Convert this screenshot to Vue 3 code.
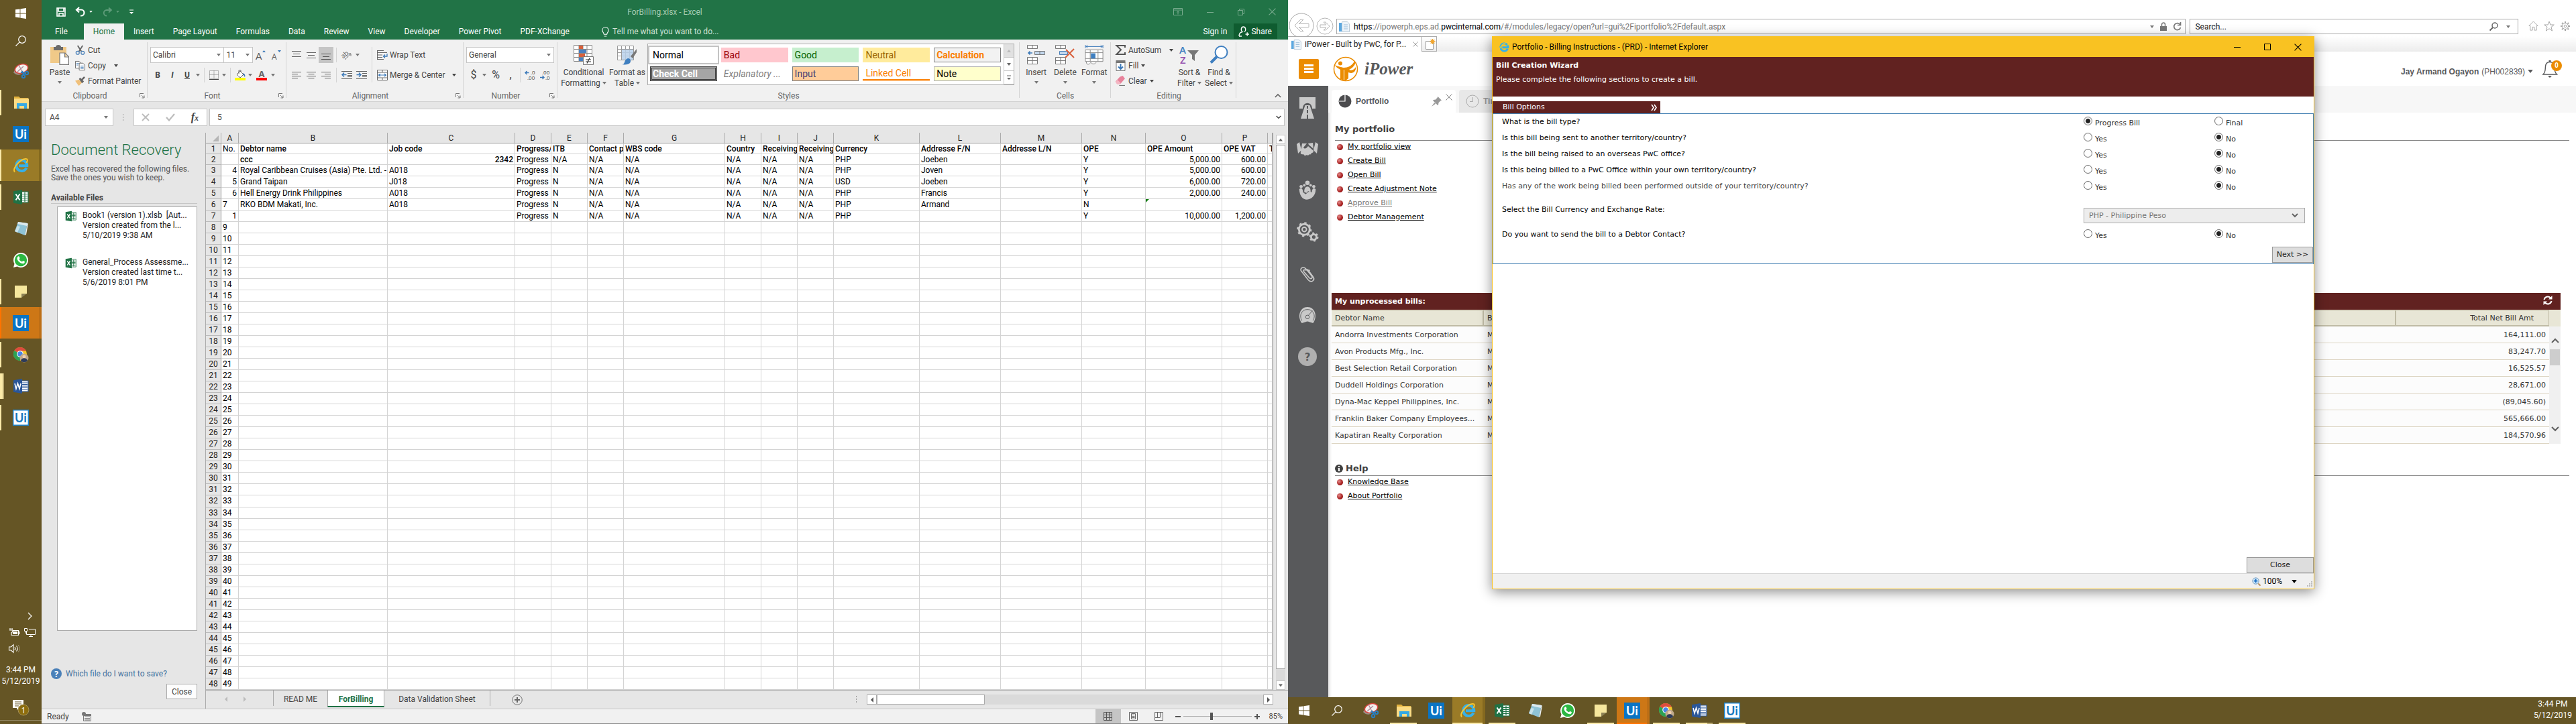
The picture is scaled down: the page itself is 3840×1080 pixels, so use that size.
<script setup>
import { h, ref } from 'vue'

const glyphs = {
  win: ['0 0 16 16', '<path fill="#fff" d="M0 2.3 6.6 1.400V7.500H0zM7.400 1.300 16 0v7.500H7.400zM0 8.400h6.600v6.100L0 13.600zM7.400 8.400H16V16l-8.600-1.200z"/>'],
  find: ['0 0 16 16', '<g fill="none" stroke="#fff" stroke-width="1.200"><circle cx="10" cy="6" r="5.300"/><path d="M6.200 9.800.500 15.500"/></g>'],
  snip: ['0 0 24 24', '<path d="M1 14c3 4 9 5 12 2l2-3L4 9z" fill="#9c9088"/><ellipse cx="13" cy="8.500" rx="10" ry="6.500" transform="rotate(-18 13 8.500)" fill="#f4f0ee" stroke="#d9433c" stroke-width="1.500"/><path d="m9 3 5 10M16 5l-9 8" stroke="#a89" stroke-width="1.300"/><g fill="none" stroke="#2a7fc0" stroke-width="2"><circle cx="16" cy="20" r="2.200"/><circle cx="21" cy="15" r="2.200"/><path d="m14 12 3 6M12 14l7 1"/></g>'],
  folder: ['0 0 24 24', '<path fill="#e2b13c" d="M2 3h7l2 2h12v4H2z"/><path fill="#fbdc85" d="M2 6h22v15H2z"/><path fill="#36a9e4" d="M6 21v-8h15v8h-4v-4h-7v4z"/>'],
  ui: ['0 0 24 24', '<path fill="#0a74c4" d="M0 0h24v24H0z"/><text x="12" y="18.500" text-anchor="middle" font-family="Lato, sans-serif" font-size="18" font-weight="700" fill="#fff">Ui</text>'],
  uiw: ['0 0 24 24', '<path fill="#fff" stroke="#1f86d1" stroke-width="1.500" d="M.7.7h22.600v22.600H.7z"/><text x="12" y="18.500" text-anchor="middle" font-family="Lato, sans-serif" font-size="18" font-weight="700" fill="#1478c0">Ui</text>'],
  ie: ['0 0 24 24', '<path d="M20.500 15.500a8 8 0 1 1 .8-3.200H9" fill="none" stroke="#35b1ea" stroke-width="4"/><path d="M3 21.500C-1 17 10 3 19 2c4-.3 3 3 1.500 6" fill="none" stroke="#f6c52f" stroke-width="1.900"/>'],
  xl: ['0 0 24 24', '<path fill="#fff" stroke="#207245" stroke-width="1.200" d="M12 4h11v16H12z"/><path stroke="#207245" stroke-width="1.200" d="M14 7.500h8M14 10.500h8M14 13.500h8M14 16.500h8M18 5v14"/><path fill="#207245" d="M1 3.200 14 1v22L1 20.800z"/><path d="m4.500 7.500 6 9m0-9-6 9" stroke="#fff" stroke-width="2"/>'],
  word: ['0 0 24 24', '<path fill="#fff" stroke="#2a5699" stroke-width="1.200" d="M12 4h11v16H12z"/><path stroke="#2a5699" stroke-width="1.200" d="M14 7h8M14 9.500h8M14 12h8M14 14.500h8M14 17h8"/><path fill="#2a5699" d="M1 3.200 14 1v22L1 20.800z"/><path d="m3 8 2 8 2.500-8 2.500 8 2-8" fill="none" stroke="#fff" stroke-width="1.600"/>'],
  pad: ['0 0 24 24', '<path d="M8 2 22 4l-4 18-15-6z" fill="#8fc3d6"/><path d="M8 2 22 4l-1 4L7 5z" fill="#dce9ee"/><path d="m22 4-4 18 2-1 3-16z" fill="#e9eef0"/><path d="m7 8 4 1-4 9-4-2z" fill="#c8e2ea"/>'],
  wa: ['0 0 24 24', '<path fill="#fff" d="M12 1a11 11 0 1 1-5.300 20.600L1 23l1.500-5.500A11 11 0 0 1 12 1z"/><circle cx="12" cy="12" r="9.200" fill="#2cb742"/><path fill="#fff" d="M7.500 7c1-1.300 2-.8 2.300.3l.7 1.700c.1.700-1.200 1.300-.8 1.900 1 1.700 2.200 2.700 3.900 3.400.7.200 1.300-1.500 1.900-1.300l2.100 1c.6.400.2 2-.7 2.700-1.200.9-3 .7-5.300-.5-2.400-1.300-4.300-3.700-4.800-5.200-.5-1.600-.1-2.900.7-4z"/>'],
  note: ['0 0 24 24', '<path fill="#f6e79d" d="M3 3h18v12h-8v6H3z"/><path fill="#8c8156" d="m13 21 8-6h-8z"/>'],
  chrome: ['0 0 24 24', '<circle cx="11" cy="11" r="10" fill="#f3c72b"/><path fill="#dd4b3e" d="M11 11 2.300 6A10 10 0 0 1 20 6.500h-9z"/><path fill="#2da154" d="M11 11v10A10 10 0 0 1 2.300 6z"/><circle cx="11" cy="11" r="4.800" fill="#fff"/><circle cx="11" cy="11" r="3.700" fill="#4a86e8"/><circle cx="17" cy="17" r="6.500" fill="#c0aa8d"/><circle cx="17" cy="15" r="2.500" fill="#efcfae"/><path d="M12 21c1-5 9-5 10 0-2 3-8 3-10 0z" fill="#2d3b59"/>'],
  save: ['0 0 14 14', '<path fill="none" stroke="#fff" stroke-width="1.600" d="M1 1h12v12H1zM3 1v5h8V1M4 13V9h6v4"/>'],
  undo: ['0 0 16 16', '<path d="M2 4.500h7a4.500 4.500 0 0 1 0 9H8M6 1 2 4.800 6 8.500" fill="none" stroke="#fff" stroke-width="2.200"/>'],
  redo: ['0 0 16 16', '<path d="M14 5H7a4 4 0 0 0 0 8.500M10 1.500 14 5l-4 3.700" fill="none" stroke="#5f9c7a" stroke-width="1.800"/>'],
  qat: ['0 0 8 8', '<path d="M1 1h6" stroke="currentColor"/><path d="M1 4h6L4 7z" fill="currentColor"/>'],
  caret: ['0 0 6 4', '<path d="M0 0h6L3 4z" fill="currentColor"/>'],
  up: ['0 0 6 4', '<path d="M0 4h6L3 0z" fill="currentColor"/>'],
  left: ['0 0 4 8', '<path d="M4 0v8L0 4z" fill="currentColor"/>'],
  right: ['0 0 4 8', '<path d="M0 0v8l4-4z" fill="currentColor"/>'],
  chevUp: ['0 0 12 8', '<path d="m1 7 5-5 5 5" fill="none" stroke="currentColor" stroke-width="2"/>'],
  chevDown: ['0 0 12 8', '<path d="m1 1 5 5 5-5" fill="none" stroke="currentColor" stroke-width="2"/>'],
  chevRight: ['0 0 8 12', '<path d="m1 1 5 5-5 5" fill="none" stroke="currentColor" stroke-width="1.200"/>'],
  ribbonOpt: ['0 0 14 11', '<path d="M.5.5h13v10H.5zM.5 3h13M7 9.500V5M5 6.500 7 4.700l2 1.800" fill="none" stroke="currentColor"/>'],
  min: ['0 0 10 10', '<path d="M0 5.500h10" stroke="currentColor"/>'],
  restore: ['0 0 10 10', '<path d="M.5 2.500h7v7h-7zM2.500 2.500v-2h7v7h-2" fill="none" stroke="currentColor"/>'],
  max: ['0 0 10 10', '<path d="M.5.5h9v9h-9z" fill="none" stroke="currentColor"/>'],
  close: ['0 0 10 10', '<path d="m.5.5 9 9m0-9-9 9" fill="none" stroke="currentColor"/>'],
  bulb: ['0 0 10 14', '<path d="M3 10.500C3 8 .7 7.500.7 4.800a4.300 4.300 0 0 1 8.600 0C9.300 7.500 7 8 7 10.500zM3.300 13h3.400" fill="none" stroke="#fff"/>'],
  share: ['0 0 16 16', '<path d="M1 15c0-4 2-6 5-6.500C3.500 7 3.500 1 7.500 1S11.500 7 9 8.500M10.500 12H16M13.200 9.200v5.600M1 15h4" fill="none" stroke="#fff" stroke-width="1.300"/>'],
  paste: ['0 0 28 30', '<path fill="#f0c988" d="M0 3h24v24H0z"/><path fill="#6a6a6a" d="M5 3h3c0-4 8-4 8 0h3v5H5z"/><path fill="#fff" stroke="#7a7a7a" stroke-width="1.200" d="M14 12h8l5.400 5.500V29.400H14zM21.500 12v6H27"/>'],
  cut: ['0 0 16 16', '<path d="M4 1l6 9.500M12 1 6 10.500" stroke="#666" stroke-width="2"/><g fill="none" stroke="#4a80b8" stroke-width="1.400"><circle cx="4" cy="12.500" r="2.600"/><circle cx="12" cy="12.500" r="2.600"/></g>'],
  copy: ['0 0 16 16', '<g fill="#fff" stroke="#666"><path d="M.5 1.500h6l3 3v8h-9z"/><path d="M6.500 4.500h6l3 3v8h-9z"/></g><path d="M2 5h4M2 7.500h3M8.500 9h5M8.500 11h5M8.500 13h5" stroke="#4a80b8"/>'],
  painter: ['0 0 16 16', '<path fill="#f0c07a" d="m0 8 6-2 5 5-5 5c-2-2-4-5-6-8z"/><path fill="#666" d="m6 5 2-2 2 2 4-4 2 2-4 4 2 2-3 3z"/>'],
  growA: ['0 0 16 16', '<text x="0" y="15" font-family="Open Sans, sans-serif" font-size="15" fill="#555">A</text><path fill="#3a78b8" d="M10 4h5l-2.500-3z"/>'],
  shrinkA: ['0 0 16 16', '<text x="1" y="15" font-family="Open Sans, sans-serif" font-size="12" fill="#555">A</text><path fill="#3a78b8" d="M10 1h5l-2.500 3z"/>'],
  borders: ['0 0 14 14', '<path d="M.5.5h13v12H.5zM7 .5v12M.5 6.500h13" fill="none" stroke="#777" stroke-dasharray="1 1"/><path d="M0 13.500h14" stroke="#444"/>'],
  fill: ['0 0 16 16', '<path fill="#fff" stroke="#666" d="m3 7 5-5 5 5-5 5zM6 6V1h3v2"/><path d="M12 5c3 1 4 3 3 6l-2-3z" fill="#3a78b8"/><path fill="#ffff00" d="M0 12h16v4H0z"/>'],
  fontA: ['0 0 16 16', '<path fill="#f00" d="M0 12h16v4H0z"/><text x="8" y="11" text-anchor="middle" font-family="Open Sans, sans-serif" font-size="13" font-weight="700" fill="#666">A</text>'],
  at: ['0 0 14 14', '<path d="M0 1.500h14M2 5.500h10M0 9.500h14" stroke="#666"/>'],
  am: ['0 0 14 14', '<path d="M0 3.500h14M2 7.500h10M0 11.500h14" stroke="#666"/>'],
  ab: ['0 0 14 14', '<path d="M0 5.500h14M2 9.500h10M0 13.500h14" stroke="#555"/>'],
  al: ['0 0 14 14', '<path d="M0 2.500h14M0 5.500h9M0 8.500h14M0 11.500h9" stroke="#666"/>'],
  ac: ['0 0 14 14', '<path d="M0 2.500h14M2.500 5.500h9M0 8.500h14M2.500 11.500h9" stroke="#666"/>'],
  ar: ['0 0 14 14', '<path d="M0 2.500h14M5 5.500h9M0 8.500h14M5 11.500h9" stroke="#666"/>'],
  orient: ['0 0 16 16', '<text x="0" y="11" transform="rotate(-40 5 9)" font-family="Open Sans, sans-serif" font-size="10" fill="#555">ab</text><path d="m5 15 9-9M10.500 6H14v3.500" fill="none" stroke="#666"/>'],
  outd: ['0 0 16 14', '<path d="M0 1.500h16M9 4.500h7M9 7.500h7M9 9.500h7M0 12.500h16" stroke="#666"/><path d="M7.500 6.500H1M4 3.500l-3 3 3 3" stroke="#3a78b8" stroke-width="1.500" fill="none"/>'],
  ind: ['0 0 16 14', '<path d="M0 1.500h16M9 4.500h7M9 7.500h7M9 9.500h7M0 12.500h16" stroke="#666"/><path d="M.5 6.500H7M4 3.500l3 3-3 3" stroke="#3a78b8" stroke-width="1.500" fill="none"/>'],
  wrap: ['0 0 16 16', '<path d="M.5 1v14M0 1.500h10M0 4.500h15M0 8h8M0 11.500h8M0 14.500h10" fill="none" stroke="#666"/><path d="M15 6v4h-5M12 7.500 9.500 10l2.500 2.500" fill="none" stroke="#3a78b8" stroke-width="1.300"/>'],
  merge: ['0 0 16 16', '<path d="M.5.5h15v15H.5zM.5 4h15M.5 12h15M8 .5V4M8 12v3.500" fill="#fff" stroke="#666"/><path d="M2.500 8h11M5 6 2.500 8 5 10M11 6l2.500 2L11 10" fill="none" stroke="#3a78b8" stroke-width="1.200"/>'],
  dec0: ['0 0 18 16', '<path d="M6.500 4.500H1M3.500 2 1 4.500 3.500 7" fill="none" stroke="#3a78b8" stroke-width="1.400"/><g font-family="Open Sans, sans-serif" font-size="8" fill="#444"><text x="9" y="7">.0</text><text x="4" y="15">.00</text></g>'],
  dec1: ['0 0 18 16', '<path d="M1 11.500h6M4.500 9 7 11.500 4.500 14" fill="none" stroke="#3a78b8" stroke-width="1.400"/><g font-family="Open Sans, sans-serif" font-size="8" fill="#444"><text x="4" y="7">.00</text><text x="9" y="15">.0</text></g>'],
  cond: ['0 0 30 30', '<path d="M.5.5h27v24H.5zM.5 6.500h27M.5 12.500h27M.5 18.500h27M8 .5v24M14 .5v24M20 .5v24" fill="#fff" stroke="#888"/><path fill="#d8603c" d="M8 1h6v5H8zM8 13h9v5H8z"/><path fill="#4a80c0" d="M8 7h11v5H8zM8 19h6v5H8z"/><path fill="#fff" stroke="#777" d="M14.500 17.500h15v12h-15z"/><path d="M18 22h8M18 25h8M24 19.500l-4 8" stroke="#333" stroke-width="1.200"/>'],
  ftable: ['0 0 30 30', '<path d="M.5 1.500h24v21H.5zM.5 6.500h24M.5 11.500h24M.5 16.500h24M6.500 1.500v21M12.500 1.500v21M18.500 1.500v21" fill="#fff" stroke="#999"/><path d="M7 7h17v15H7z" fill="#b8d0ea" opacity=".85"/><path fill="#777" d="m29 6-9 11 3 3 6-9z"/><path fill="#3f7fc0" d="M7 29c5 0 3-5 7-8s8 2 5 6c-2 2-7 3-12 2z"/>'],
  ins: ['0 0 27 30', '<path d="M.5.5h15v5H.5zM8 .5v5M.5 18.500h15v10H.5zM8 18.500v10M.5 23.500h15" fill="#fff" stroke="#777"/><path d="M11.500 9.500h15v5h-15zM19 9.500v5" fill="#c3d8ee" stroke="#777"/><path d="M8 12H2M4.500 9.500 2 12l2.500 2.500" fill="none" stroke="#3a78b8" stroke-width="1.500"/>'],
  del: ['0 0 29 30', '<path d="M.5.5h15v5H.5zM8 .5v5M.5 18.500h15v10H.5zM8 18.500v10M.5 23.500h15" fill="#fff" stroke="#777"/><path d="M6.500 9.500h12v5h-12z" fill="#c3d8ee" stroke="#4a80b8"/><path d="m16 7 12 12m0-13L15 19" stroke="#d8603c" stroke-width="2"/>'],
  fmt: ['0 0 29 31', '<path d="M1 2.500h26M.5 0v5M27.500 0v5M4 .500 1.500 2.500 4 4.500M24 .500l2.500 2L24 4.500" fill="none" stroke="#3a78b8"/><path d="M.5 7.500h27v18H.5zM.5 12h27M.5 21h27M8 7.500v18M20 7.500v18" fill="#fff" stroke="#888"/><path fill="#3f7fc0" d="M9 13h7v8H9z"/><path d="M2 26c0 6 5 4 7 1 1 3 7 3 8 0" fill="#fff" stroke="#888"/>'],
  sum: ['0 0 15 15', '<path d="M14 4V1H1.500l6.500 6.300L1.500 14H14v-3" fill="none" stroke="#555" stroke-width="2"/>'],
  filld: ['0 0 14 16', '<path d="M.5 2.500h13v13H.5z" fill="#fff" stroke="#777"/><path fill="#777" d="M0 0h14v4H0z"/><path d="M7 5v8M3.500 9.500 7 13l3.500-3.500" fill="none" stroke="#3a78b8" stroke-width="2"/>'],
  clear: ['0 0 14 14', '<path fill="#e8829a" d="M6 1.500 10 0l3 4-6 7-5 0L0 8z"/><path fill="#f3b6c3" d="m2.500 5.500 5 5L6 12H2L0 9z"/><path d="M5 13.500h8" stroke="#777"/>'],
  sort: ['0 0 30 28', '<g font-family="Open Sans, sans-serif" font-size="15" font-weight="600"><text x="0" y="12" fill="#3f7fc0">A</text><text x="1" y="27" fill="#9552b0">Z</text></g><path fill="#777" d="M12 7h17l-6 7v9l-4-3v-6z"/>'],
  lens: ['0 0 28 28', '<circle cx="17.500" cy="10" r="9" fill="#fff" stroke="#3f7fc0" stroke-width="2"/><path d="M11 16.500 2 25.500" stroke="#3f7fc0" stroke-width="4"/>'],
  launch: ['0 0 8 8', '<path d="M.5 6V.500H6M3 3l4 4M7 3.500V7H3.500" fill="none" stroke="#777"/>'],
  cancel: ['0 0 12 12', '<path d="m1 1 10 10M11 1 1 11" stroke="#bcbcbc" stroke-width="1.800"/>'],
  tick: ['0 0 14 12', '<path d="m1 6 4 4.500L13 1" fill="none" stroke="#bcbcbc" stroke-width="2.200"/>'],
  plus: ['0 0 16 16', '<circle cx="8" cy="8" r="7.300" fill="none" stroke="#777"/><path d="M8 4v8M4 8h8" stroke="#666" stroke-width="2"/>'],
  corner: ['0 0 9 9', '<path d="M9 0v9H0z" fill="#b5b5b5"/>'],
  qmark: ['0 0 16 16', '<circle cx="8" cy="8" r="8" fill="#4a80b8"/><text x="8" y="12.500" text-anchor="middle" font-family="Open Sans, sans-serif" font-size="12" font-weight="700" fill="#fff">?</text>'],
  macro: ['0 0 14 14', '<path d="M2.500 3.500h11v10h-11zM4 7h8M4 9.500h8M4 12h8" fill="none" stroke="#777"/><path d="M3 4h10v2H3z" fill="#777"/><circle cx="3" cy="3" r="3" fill="#777"/>'],
  vgrid: ['0 0 13 13', '<path d="M.5.5h12v12H.5zM.5 4.500h12M.5 8.500h12M4.500.5v12M8.500.5v12" fill="none" stroke="#555"/>'],
  vpage: ['0 0 13 13', '<path d="M.5.5h12v12H.5zM3.500 2.500h6v8h-6zM4.500 4.500h4M4.500 6.500h4M4.500 8.500h4" fill="none" stroke="#666"/>'],
  vbreak: ['0 0 13 13', '<path d="M.5.5h12v12H.5zM4.500 1v7M.5 8.500h8M8.500 1v7" fill="none" stroke="#666"/>'],
  batt: ['0 0 17 12', '<path d="M5.500 3.500h9v7h-9M16 5v4M2 0v3M5 0v3M1 3h5v2L4 7v3.500h2" fill="none" stroke="#fff" stroke-width="1.200"/><path fill="#fff" d="M6 5h7v4H6z"/>'],
  net: ['0 0 17 13', '<path d="M3.500 5v4.500h13v-8H7M7 12.500h6M10 10v2.500M.5.500h4v4h-4zM2.500 5v3" fill="none" stroke="#fff"/>'],
  vol: ['0 0 17 13', '<path d="M.5 4h3L7 .800v11.400L3.500 9h-3zM9 4c1 1.500 1 3.500 0 5M11.500 2.500c2 2.500 2 5.500 0 8" fill="none" stroke="#fff" stroke-width="1.100"/><path d="M14 1c3 3.500 3 7.500 0 11" fill="none" stroke="#a3987a"/>'],
  notif: ['0 0 26 25', '<path fill="#fff" d="M1 1h16v12h-6l-4 3v-3H1z"/><path d="M4 4h10M4 7h10M4 10h6" stroke="#655525"/><circle cx="17" cy="16" r="8" fill="#8c6d0e" stroke="#a8945a"/><text x="17" y="20.500" text-anchor="middle" font-family="Open Sans, sans-serif" font-size="12" fill="#fff">1</text>'],
  back: ['0 0 38 38', '<circle cx="19" cy="19" r="18" fill="#fff" stroke="#aaa"/><path d="M9 19l9-9h4l-6.500 6.500H30v5H15.500L22 28h-4z" fill="#fff" stroke="#b5b5b5"/>'],
  fwd: ['0 0 26 26', '<circle cx="13" cy="13" r="12" fill="#fff" stroke="#b5b5b5"/><path d="m20 13-6-6h-3l4 4H6v4h9l-4 4h3z" fill="#fff" stroke="#b5b5b5"/>'],
  page: ['0 0 16 16', '<path fill="#5ca8e0" d="M0 2h4v13H0z"/><path fill="#edf4fa" stroke="#b9c9d6" d="M4.500.5h8l3 3v12h-11z"/><path d="M7 5h6M7 8h6M7 11h6" stroke="#9bbcd8"/>'],
  newtab: ['0 0 16 16', '<path fill="#fff" stroke="#999" d="M2.500 3.500h11v12h-11z"/><path d="M12.500 0v8M8.500 4h8M9.700 1.200l5.600 5.600M15.300 1.200 9.700 6.800" stroke="#f2a52c" stroke-width="1.300"/>'],
  lock: ['0 0 10 13', '<path d="M2.500 6V3.500a2.500 2.500 0 0 1 5 0V6" fill="none" stroke="#777" stroke-width="1.500"/><path fill="#777" d="M0 6h10v7H0z"/>'],
  reload: ['0 0 13 13', '<path d="M11 4a5 5 0 1 0 .5 4M11.500 0v4.500H7" fill="none" stroke="#777" stroke-width="1.700"/>'],
  mag: ['0 0 13 13', '<circle cx="8" cy="5" r="4" fill="none" stroke="#666" stroke-width="1.500"/><path d="m5 8-4.500 4.500" stroke="#666" stroke-width="2"/>'],
  home: ['0 0 16 16', '<path d="m1 8 7-7 7 7h-2v7H9.500v-5h-3v5H3V8z" fill="none" stroke="#a5a5a5"/>'],
  star: ['0 0 16 16', '<path d="m8 1 2 5h5.300l-4.300 3.500L12.500 15 8 11.700 3.500 15 5 9.500.7 6H6z" fill="none" stroke="#a5a5a5"/>'],
  cog: ['0 0 16 16', '<path d="M8 1v2M8 13v2M1 8h2M13 8h2M3 3l1.500 1.500M11.500 11.500 13 13M13 3l-1.500 1.500M4.500 11.500 3 13" stroke="#a5a5a5" stroke-width="2"/><circle cx="8" cy="8" r="4.500" fill="#fff" stroke="#a5a5a5"/><circle cx="8" cy="8" r="1.800" fill="none" stroke="#a5a5a5"/>'],
  ipower: ['0 0 38 38', '<circle cx="19" cy="19" r="17.500" fill="#fff" stroke="#eb8c00" stroke-width="1.500"/><circle cx="11" cy="10.500" r="3" fill="#eb8c00"/><path fill="#eb8c00" d="M3 13c6 3 10 3 13 4 6 0 13-3 16-10l2 2c-2 6-6 9-10 11 3 2 8 0 10-4 1 5-3 9-7 9-2 0-3-1-4-1v9l-4 3h-2V20h-1v16l-5-2V20C8 18 4 16 3 13z"/>'],
  pie: ['0 0 20 20', '<circle cx="10" cy="10" r="9.500" fill="#4c4c4e"/><path d="M10 0v10H1" stroke="#fff" stroke-width="1.200" fill="none"/>'],
  pin: ['0 0 16 16', '<path fill="#999" d="m10 0 6 6-2 1-3 3c0 2 0 3-1 4L2 6c1-1 3-1 4-1l3-3zM4.500 9.500l2 2L0 16z"/>'],
  clock: ['0 0 20 20', '<circle cx="10" cy="10" r="9" fill="none" stroke="#aaa"/><path d="M10.500 4v6.500H6" fill="none" stroke="#aaa"/>'],
  bell: ['0 0 24 26', '<path d="M1 21c4-4 3-8 3.500-12C5 4 8 2.500 11 2.500S17 4 17.500 9c.5 4 0 8 4 12z" fill="none" stroke="#58595b" stroke-width="1.400"/><path fill="#58595b" d="M8 23h6l-3 3zM9.500 0h3v3h-3z"/>'],
  road: ['0 0 28 34', '<path fill="#c9c9c9" d="M2 2h24v17h-5C21 8 7 8 7 19H2zM4 34l6.500-20h7L24 34z"/><path d="M14 15v4M14 21v5M14 28v6" stroke="#58595b" stroke-width="2"/>'],
  hands: ['0 0 32 22', '<path fill="#c9c9c9" d="m0 4 4-3 3 12-5 5zM32 4l-4-3-3 12 5 5zM8 3l7 0-5 6c2 3 5 1 7-2l8 7c0 3-2 3-3 3 0 2-2 3-3 2-1 2-3 2-4 1-2 2-4 1-5-1-3 1-5-1-4-3zM17 3l7-1 1 9-7-6z"/>'],
  people: ['0 0 28 34', '<g fill="#c9c9c9"><circle cx="14" cy="5" r="3.500"/><circle cx="4" cy="11" r="2.500"/><circle cx="24" cy="11" r="2.500"/><circle cx="9" cy="9" r="2"/><circle cx="19" cy="9" r="2"/><path d="M9 20c-1-12 11-12 10 0l-4-2-2 3zM1 15c4-3 6 0 6 5l4 3 5-4 5 1c0-5 2-8 6-5 1 18-25 26-26 0z"/></g>'],
  gears: ['0 0 34 34', '<g fill="none" stroke="#c9c9c9"><circle cx="12" cy="13" r="8.500" stroke-width="3"/><circle cx="12" cy="13" r="3.500" stroke-width="2"/><circle cx="12" cy="13" r="10.500" stroke-width="2.500" stroke-dasharray="3.500 4.700"/><circle cx="27" cy="25" r="4.300" stroke-width="3"/><circle cx="27" cy="25" r="6.300" stroke-width="2.500" stroke-dasharray="3 3.600"/></g>'],
  clip: ['0 0 26 28', '<path d="m17 8-9-1c-2 0-2 2 0 4l8 9c3 3 6 0 4-3L10 5C6 1 0 5 3 9l11 14c5 6 12 1 8-5L13 6" fill="none" stroke="#c9c9c9" stroke-width="1.700" transform="translate(0 1)"/>'],
  gauge: ['0 0 28 28', '<path fill="#c9c9c9" d="M5 27C-3 16 2 1 14 1s17 15 9 26l-6-2c-2-1-4-1-6 0z"/><path d="M5 23C0 14 5 5 14 5s14 9 9 18M15 15l7-8" fill="none" stroke="#58595b"/><circle cx="14" cy="17" r="3" fill="none" stroke="#58595b"/>'],
  help: ['0 0 28 28', '<circle cx="14" cy="14" r="14" fill="#b0b0b0"/><text x="14" y="20" text-anchor="middle" font-family="DejaVu Sans, sans-serif" font-size="15" font-weight="700" fill="#58595b">?</text>'],
  info: ['0 0 12 12', '<circle cx="6" cy="6" r="6" fill="#404040"/><path d="M5 2h2v2H5zM4.500 5H7v4h1v1H4.500V9H5V6h-.5z" fill="#fff"/>'],
  sync: ['0 0 14 14', '<path d="M1.500 6a5.500 5.500 0 0 1 9.500-2.500M12.500 8A5.500 5.500 0 0 1 3 10.500" fill="none" stroke="#fff" stroke-width="2"/><path fill="#fff" d="M13.500 0v5.500H8zM.5 14V8.500H6z"/>'],
  dbl: ['0 0 9 9', '<path d="m1 0 3 4.500L1 9M5 0l3 4.500L5 9" fill="none" stroke="#fff" stroke-width="1.600"/>'],
  zoom: ['0 0 14 14', '<circle cx="6" cy="6" r="5" fill="#d6ebfa" stroke="#5a8ab5"/><path d="M6 3v6M3 6h6" stroke="#1a6fc4" stroke-width="2"/><path d="m10 10 3.500 3.500" stroke="#b58a55" stroke-width="2"/>'],
  grip: ['0 0 9 9', '<path fill="#bbb" d="M7 0h2v2H7zM7 3h2v2H7zM7 6h2v2H7zM4 3h2v2H4zM4 6h2v2H4zM1 6h2v2H1z"/>'],
}

const Icon = (p) => {
  const [box, body] = glyphs[p.n]
  return h('svg', { viewBox: box, width: p.w, height: p.h ?? p.w, 'aria-hidden': 'true', innerHTML: body })
}
Icon.props = ['n', 'w', 'h']

const apps = [
  { n: 'snip', label: 'Snipping Tool' },
  { n: 'folder', label: 'File Explorer', open: true },
  { n: 'ui', label: 'UiPath Studio' },
  { n: 'ie', label: 'Internet Explorer', active: true },
  { n: 'xl', label: 'Excel', open: true },
  { n: 'pad', label: 'Notepad' },
  { n: 'wa', label: 'WhatsApp' },
  { n: 'note', label: 'Sticky Notes', open: true },
  { n: 'ui', label: 'UiPath', alert: true },
  { n: 'chrome', label: 'Chrome', open: true },
  { n: 'word', label: 'Word', open: true, many: true },
  { n: 'uiw', label: 'UiPath Robot', open: true },
]
const appState = (a) => ({ open: a.open, active: a.active, alert: a.alert, many: a.many })

const tabs = ['Insert', 'Page Layout', 'Formulas', 'Data', 'Review', 'View', 'Developer', 'Power Pivot', 'PDF-XChange']
const styles = [
  ['Normal', 'normal'], ['Bad', 'bad'], ['Good', 'good'], ['Neutral', 'neutral'], ['Calculation', 'calc'],
  ['Check Cell', 'check'], ['Explanatory ...', 'expl'], ['Input', 'inp'], ['Linked Cell', 'linked'], ['Note', 'notec'],
]

const letters = 'ABCDEFGHIJKLMNOP'.split('')
const widths = [23, 26, 222, 190, 54, 54, 54, 151, 54, 54, 54, 128, 121, 121, 95, 114, 68]
const heads = ['No.', 'Debtor name', 'Job code', 'Progress/F', 'ITB', 'Contact pe', 'WBS code', 'Country', 'Receiving', 'Receiving', 'Currency', 'Addresse F/N', 'Addresse L/N', 'OPE', 'OPE Amount', 'OPE VAT', 'T']
const line = (no, name, job, itb, cur, first, ope, amt, vat) =>
  [no, name, job, 'Progress', itb, 'N/A', 'N/A', 'N/A', 'N/A', 'N/A', cur, first, '', ope, amt, vat, '']
const filled = [
  heads,
  line('', 'ccc', '2342', 'N/A', 'PHP', 'Joeben', 'Y', '5,000.00', '600.00'),
  line('4', 'Royal Caribbean Cruises (Asia) Pte. Ltd. -', 'A018', 'N', 'PHP', 'Joven', 'Y', '5,000.00', '600.00'),
  line('5', 'Grand Taipan', 'J018', 'N', 'USD', 'Joeben', 'Y', '6,000.00', '720.00'),
  line('6', 'Hell Energy Drink Philippines', 'A018', 'N', 'PHP', 'Francis', 'Y', '2,000.00', '240.00'),
  line('7', 'RKO BDM Makati, Inc.', 'A018', 'N', 'PHP', 'Armand', 'N', '', ''),
  line('1', '', '', 'N', 'PHP', '', 'Y', '10,000.00', '1,200.00'),
]
const rows = [...filled]
for (let n = 9; n <= 49; n++) rows.push([String(n), ...Array(16).fill('')])

const cellClass = (r, c) => ({
  b: (r === 0 && c > 0) || (r === 1 && (c === 1 || c === 2)),
  r: r > 0 && (c === 14 || c === 15 || (r === 1 && c === 2) || (c === 0 && [2, 3, 4, 6].includes(r))),
  flag: r === 5 && c === 14,
})

const files = [
  ['Book1 (version 1).xlsb  [Aut...', 'Version created from the l...', '5/10/2019 9:38 AM'],
  ['General_Process Assessme...', 'Version created last time t...', '5/6/2019 8:01 PM'],
]
const side = [['road', 28, 34], ['hands', 34, 22], ['people', 28, 32], ['gears', 34, 32], ['clip', 24, 26], ['gauge', 28, 26], ['help', 28, 28]]
const links = ['My portfolio view', 'Create Bill', 'Open Bill', 'Create Adjustment Note', 'Approve Bill', 'Debtor Management']
const bills = [
  ['Andorra Investments Corporation', '164,111.00'],
  ['Avon Products Mfg., Inc.', '83,247.70'],
  ['Best Selection Retail Corporation', '16,525.57'],
  ['Duddell Holdings Corporation', '28,671.00'],
  ['Dyna-Mac Keppel Philippines, Inc.', '(89,045.60)'],
  ['Franklin Baker Company Employees...', '565,666.00'],
  ['Kapatiran Realty Corporation', '184,570.96'],
]
const questions = ref([
  { q: 'What is the bill type?', o: ['Progress Bill', 'Final'], v: 'Progress Bill' },
  { q: 'Is this bill being sent to another territory/country?', o: ['Yes', 'No'], v: 'No' },
  { q: 'Is the bill being raised to an overseas PwC office?', o: ['Yes', 'No'], v: 'No' },
  { q: 'Is this being billed to a PwC Office within your own territory/country?', o: ['Yes', 'No'], v: 'No' },
  { q: 'Has any of the work being billed been performed outside of your territory/country?', o: ['Yes', 'No'], v: 'No', dim: true },
  { q: 'Select the Bill Currency and Exchange Rate:', select: true },
  { q: 'Do you want to send the bill to a Debtor Contact?', o: ['Yes', 'No'], v: 'No' },
])
</script>

<template>
  <div class="desktop">
    <section class="monitor first">
      <nav class="vbar" aria-label="Taskbar">
        <button class="sys" aria-label="Start"><Icon n="win" w="16" /></button>
        <button class="sys search" aria-label="Search"><Icon n="find" w="16" /></button>
        <button v-for="a in apps" :key="a.label" class="app" :class="appState(a)" :aria-label="a.label"><Icon :n="a.n" w="24" /></button>
        <div class="tray">
          <span class="more"><Icon n="chevRight" w="8" h="12" /></span>
          <div class="trayrow"><Icon n="batt" w="17" h="12" /><Icon n="net" w="17" h="13" /></div>
          <div class="trayrow"><Icon n="vol" w="17" h="13" /></div>
          <div class="clock"><span>3:44 PM</span><span>5/12/2019</span></div>
          <span class="notif"><Icon n="notif" w="26" h="25" /></span>
        </div>
      </nav>

      <main class="excel">
        <header class="titlebar">
          <div class="qat">
            <button aria-label="Save"><Icon n="save" w="14" /></button>
            <button aria-label="Undo"><Icon n="undo" w="16" /><Icon n="caret" w="5" h="3" /></button>
            <button class="faded" aria-label="Redo"><Icon n="redo" w="16" /><Icon n="caret" w="5" h="3" /></button>
            <button aria-label="Customize"><Icon n="qat" w="8" /></button>
          </div>
          <h1>ForBilling.xlsx - Excel</h1>
          <div class="winbtns">
            <button aria-label="Ribbon options"><Icon n="ribbonOpt" w="14" h="11" /></button>
            <button aria-label="Minimize"><Icon n="min" w="10" /></button>
            <button aria-label="Restore"><Icon n="restore" w="10" /></button>
            <button aria-label="Close window"><Icon n="close" w="11" /></button>
          </div>
        </header>
        <div class="tabs">
          <button class="file">File</button>
          <button class="home">Home</button>
          <button v-for="t in tabs" :key="t">{{ t }}</button>
          <label class="tell"><Icon n="bulb" w="11" h="15" /><input aria-label="Tell me" placeholder="Tell me what you want to do..." /></label>
          <button class="signin">Sign in</button>
          <button class="share"><Icon n="share" w="16" />Share</button>
        </div>

        <div class="ribbon">
          <div class="group g-clip">
            <div class="gbody">
              <button class="big paste"><Icon n="paste" w="28" h="30" /><span>Paste</span><Icon n="caret" w="6" h="4" /></button>
              <div class="stack">
                <button><Icon n="cut" w="15" />Cut</button>
                <button><Icon n="copy" w="15" />Copy<Icon class="far" n="caret" w="6" h="4" /></button>
                <button><Icon n="painter" w="15" />Format Painter</button>
              </div>
            </div>
            <footer>Clipboard<Icon class="launch" n="launch" w="8" /></footer>
          </div>

          <div class="group g-font">
            <div class="gbody two">
              <div class="row">
                <select class="combo fname" aria-label="Font"><option>Calibri</option></select>
                <select class="combo fsize" aria-label="Font size"><option>11</option></select>
                <button class="t24" aria-label="Grow font"><Icon n="growA" w="16" /></button>
                <button class="t22" aria-label="Shrink font"><Icon n="shrinkA" w="16" /></button>
              </div>
              <div class="row">
                <button class="t22"><b>B</b></button><button class="t22"><b><i>I</i></b></button><button class="t22"><b><u>U</u></b></button>
                <span class="car"><Icon n="caret" w="6" h="4" /></span><span class="sep"></span>
                <button class="t20" aria-label="Borders"><Icon n="borders" w="14" /></button><span class="car"><Icon n="caret" w="6" h="4" /></span><span class="sep"></span>
                <button class="t20" aria-label="Fill colour"><Icon n="fill" w="16" /></button><span class="car"><Icon n="caret" w="6" h="4" /></span>
                <button class="t24" aria-label="Font colour"><Icon n="fontA" w="16" /></button><span class="car"><Icon n="caret" w="6" h="4" /></span>
              </div>
            </div>
            <footer>Font<Icon class="launch" n="launch" w="8" /></footer>
          </div>

          <div class="group g-align">
            <div class="gbody">
              <div class="two">
                <div class="row">
                  <button class="t22" aria-label="Top"><Icon n="at" w="14" /></button><button class="t22" aria-label="Middle"><Icon n="am" w="14" /></button><button class="t22 on" aria-label="Bottom"><Icon n="ab" w="14" /></button>
                  <span class="sep"></span><button class="t22" aria-label="Orientation"><Icon n="orient" w="16" /></button><span class="car"><Icon n="caret" w="6" h="4" /></span>
                </div>
                <div class="row">
                  <button class="t22" aria-label="Left"><Icon n="al" w="14" /></button><button class="t22" aria-label="Centre"><Icon n="ac" w="14" /></button><button class="t22" aria-label="Right"><Icon n="ar" w="14" /></button>
                  <span class="sep"></span><button class="t22" aria-label="Outdent"><Icon n="outd" w="16" h="14" /></button><button class="t22" aria-label="Indent"><Icon n="ind" w="16" h="14" /></button>
                </div>
              </div>
              <div class="two wrapcol">
                <button class="row"><Icon n="wrap" w="16" />Wrap Text</button>
                <button class="row"><Icon n="merge" w="16" />Merge &amp; Center<Icon class="push" n="caret" w="6" h="4" /></button>
              </div>
            </div>
            <footer>Alignment<Icon class="launch" n="launch" w="8" /></footer>
          </div>

          <div class="group g-num">
            <div class="gbody two">
              <div class="row"><select class="combo fmt" aria-label="Number format"><option>General</option></select></div>
              <div class="row">
                <button class="t22 sym">$</button><span class="car"><Icon n="caret" w="6" h="4" /></span><button class="t24 sym">%</button><button class="t20 sym">,</button>
                <span class="sep"></span><button class="t22" aria-label="More decimals"><Icon n="dec0" w="18" h="16" /></button><button class="t22" aria-label="Fewer decimals"><Icon n="dec1" w="18" h="16" /></button>
              </div>
            </div>
            <footer>Number<Icon class="launch" n="launch" w="8" /></footer>
          </div>

          <div class="group g-styles">
            <div class="gbody">
              <button class="big cf"><Icon n="cond" w="30" h="30" /><span>Conditional</span><span>Formatting <Icon n="caret" w="6" h="4" /></span></button>
              <button class="big ft"><Icon n="ftable" w="30" h="30" /><span>Format as</span><span>Table <Icon n="caret" w="6" h="4" /></span></button>
              <div class="gallery">
                <div class="cells"><button v-for="s in styles" :key="s[0]" :class="s[1]">{{ s[0] }}</button></div>
                <div class="gscroll">
                  <button class="off" aria-label="Up"><Icon n="up" w="6" h="4" /></button><button aria-label="Down"><Icon n="caret" w="6" h="4" /></button><button aria-label="More"><Icon n="qat" w="8" h="8" /></button>
                </div>
              </div>
            </div>
            <footer>Styles</footer>
          </div>

          <div class="group g-cells">
            <div class="gbody">
              <button class="big"><Icon n="ins" w="27" h="30" /><span>Insert</span><Icon n="caret" w="6" h="4" /></button>
              <button class="big"><Icon n="del" w="29" h="30" /><span>Delete</span><Icon n="caret" w="6" h="4" /></button>
              <button class="big"><Icon n="fmt" w="29" h="30" /><span>Format</span><Icon n="caret" w="6" h="4" /></button>
            </div>
            <footer>Cells</footer>
          </div>

          <div class="group g-edit">
            <div class="gbody">
              <div class="stack">
                <button><Icon n="sum" w="15" />AutoSum<Icon class="far" n="caret" w="6" h="4" /></button>
                <button><Icon n="filld" w="15" h="16" />Fill<Icon n="caret" w="6" h="4" /></button>
                <button><Icon n="clear" w="15" />Clear<Icon n="caret" w="6" h="4" /></button>
              </div>
              <button class="big"><Icon n="sort" w="30" h="30" /><span>Sort &amp;</span><span>Filter <Icon n="caret" w="6" h="4" /></span></button>
              <button class="big"><Icon n="lens" w="28" h="30" /><span>Find &amp;</span><span>Select <Icon n="caret" w="6" h="4" /></span></button>
            </div>
            <footer>Editing</footer>
          </div>
          <button class="collapse" aria-label="Collapse ribbon"><Icon n="chevUp" w="10" h="7" /></button>
        </div>

        <div class="fbar">
          <select class="combo namebox" aria-label="Name box"><option>A4</option></select>
          <span class="vdots"></span>
          <div class="fx"><Icon n="cancel" w="12" /><Icon n="tick" w="14" h="12" /><i>f<small>x</small></i></div>
          <label class="formula"><input aria-label="Formula" value="5" /><Icon n="chevDown" w="8" h="6" /></label>
        </div>

        <div class="work">
          <aside class="recovery">
            <h2>Document Recovery</h2>
            <p>Excel has recovered the following files.<br />Save the ones you wish to keep.</p>
            <h3>Available Files</h3>
            <div class="files">
              <div v-for="f in files" :key="f[0]" class="file">
                <Icon n="xl" w="17" />
                <div><div v-for="l in f" :key="l">{{ l }}</div></div>
              </div>
            </div>
            <a class="which" href="#"><Icon n="qmark" w="16" />Which file do I want to save?</a>
            <button class="closebtn">Close</button>
          </aside>

          <div class="sheet">
            <div class="gridwrap">
              <table class="grid">
                <colgroup><col v-for="(w, i) in widths" :key="i" :style="{ width: w + 'px' }" /><col /></colgroup>
                <thead><tr><th class="corner"><Icon n="corner" w="9" /></th><th v-for="l in letters" :key="l">{{ l }}</th><th></th></tr></thead>
                <tbody>
                  <tr v-for="(row, r) in rows" :key="r" :class="{ short: r < 2 }">
                    <th>{{ r + 1 }}</th>
                    <td v-for="(c, i) in row" :key="i" :class="cellClass(r, i)">{{ c }}</td>
                  </tr>
                </tbody>
              </table>
              <div class="vscroll"><button aria-label="Scroll up"><Icon n="up" w="6" h="5" /></button><div class="thumb"></div><div class="gap"></div><button aria-label="Scroll down"><Icon n="caret" w="6" h="5" /></button></div>
            </div>
            <div class="sheettabs">
              <span class="arrows"><Icon n="left" w="4" h="8" /><Icon n="right" w="4" h="8" /></span>
              <button class="readme">READ ME</button><button class="cur">ForBilling</button><button class="last">Data Validation Sheet</button>
              <button class="add" aria-label="New sheet"><Icon n="plus" w="16" /></button>
              <span class="vdots"></span>
              <div class="hscroll"><button aria-label="Scroll left"><Icon n="left" w="4" h="8" /></button><div class="hthumb"></div><button aria-label="Scroll right"><Icon n="right" w="4" h="8" /></button></div>
            </div>
          </div>
        </div>

        <footer class="status">
          <span>Ready</span><Icon n="macro" w="14" />
          <div class="views">
            <span class="on"><Icon n="vgrid" w="13" /></span><span><Icon n="vpage" w="13" /></span><span><Icon n="vbreak" w="13" /></span>
            <b class="minus"></b><input type="range" aria-label="Zoom" min="10" max="190" value="85" /><b class="plus"></b><em>85%</em>
          </div>
        </footer>
      </main>
    </section>

    <section class="monitor second">
      <div class="iebar">
        <button aria-label="Back"><Icon n="back" w="38" /></button>
        <button aria-label="Forward"><Icon n="fwd" w="26" /></button>
        <div class="address">
          <Icon n="page" w="16" />
          <span class="url"><b>https</b>://ipowerph.eps.ad.<b>pwcinternal.com</b>/#/modules/legacy/open?url=gui%2Fiportfolio%2Fdefault.aspx</span>
          <Icon n="caret" w="6" h="4" /><Icon n="lock" w="10" h="13" /><Icon n="reload" w="13" />
        </div>
        <label class="address find"><input aria-label="Search" placeholder="Search..." /><Icon n="mag" w="13" /><Icon n="caret" w="6" h="4" /></label>
        <div class="ietools"><Icon n="home" w="15" /><Icon n="star" w="16" /><Icon n="cog" w="16" /></div>
      </div>
      <div class="ietabs">
        <div class="ietab"><Icon n="page" w="15" /><span>iPower - Built by PwC, for P...</span><Icon class="x" n="close" w="8" /></div>
        <button class="newtab" aria-label="New tab"><Icon n="newtab" w="16" /></button>
      </div>

      <header class="apphead">
        <button class="menu" aria-label="Menu"><i></i><i></i><i></i></button>
        <Icon n="ipower" w="38" />
        <span class="brand">iPower</span>
        <div class="user"><b>Jay Armand Ogayon</b> (PH002839) <Icon n="caret" w="8" h="5" /></div>
        <div class="bell"><Icon n="bell" w="24" h="26" /><span>0</span></div>
      </header>

      <div class="appbody">
        <nav class="sidebar"><button v-for="s in side" :key="s[0]" :aria-label="s[0]"><Icon :n="s[0]" :w="s[1]" :h="s[2]" /></button></nav>
        <div class="content">
          <div class="pagetabs">
            <div class="ptab"><Icon n="pie" w="20" /><b>Portfolio</b><Icon class="pin" n="pin" w="15" /><Icon class="px" n="close" w="10" /></div>
            <div class="ptab off"><Icon n="clock" w="20" /><b>Time</b></div>
          </div>
          <h2 class="sec">My portfolio</h2>
          <ul class="links"><li v-for="l in links" :key="l"><a href="#" :class="{ dim: l === 'Approve Bill' }">{{ l }}</a></li></ul>

          <div class="bills">
            <div class="billbar"><b>My unprocessed bills:</b><button aria-label="Refresh"><Icon n="sync" w="14" /></button></div>
            <div class="billwrap">
              <table>
                <colgroup><col class="c1" /><col /><col class="c3" /></colgroup>
                <thead><tr><th>Debtor Name</th><th>Bill Type</th><th>Total Net Bill Amt</th></tr></thead>
                <tbody><tr v-for="b in bills" :key="b[0]"><td>{{ b[0] }}</td><td>Manual</td><td>{{ b[1] }}</td></tr></tbody>
              </table>
              <div class="bscroll"><Icon n="chevUp" w="12" h="8" /><div class="bthumb"></div><Icon n="chevDown" w="12" h="8" /></div>
            </div>
          </div>

          <h2 class="sec help"><Icon n="info" w="12" />Help</h2>
          <ul class="links"><li><a href="#">Knowledge Base</a></li><li><a href="#">About Portfolio</a></li></ul>
        </div>
      </div>

      <nav class="hbar" aria-label="Taskbar">
        <button class="sys" aria-label="Start"><Icon n="win" w="16" /></button>
        <button class="sys search" aria-label="Search"><Icon n="find" w="16" /></button>
        <button v-for="a in apps" :key="a.label" class="app" :class="appState(a)" :aria-label="a.label"><Icon :n="a.n" w="24" /></button>
        <div class="clock"><span>3:44 PM</span><span>5/12/2019</span></div>
      </nav>

      <div class="popup" role="dialog" aria-label="Billing Instructions">
        <header class="ptitle">
          <Icon n="ie" w="17" /><span>Portfolio - Billing Instructions - (PRD) - Internet Explorer</span>
          <button aria-label="Minimize"><Icon n="min" w="10" /></button><button aria-label="Maximize"><Icon n="max" w="10" /></button><button aria-label="Close popup"><Icon n="close" w="11" /></button>
        </header>
        <div class="banner"><h2>Bill Creation Wizard</h2><p>Please complete the following sections to create a bill.</p></div>
        <div class="opttab"><span>Bill Options</span><Icon n="dbl" w="9" /></div>
        <form class="wizard" @submit.prevent>
          <div v-for="(x, i) in questions" :key="i" class="q" :class="{ dim: x.dim, sel: x.select }">
            <label v-if="x.select" class="qt" for="currency">{{ x.q }}</label>
            <span v-else class="qt">{{ x.q }}</span>
            <select v-if="x.select" id="currency" disabled><option>PHP - Philippine Peso</option></select>
            <template v-else><label v-for="o in x.o" :key="o" class="opt"><input v-model="x.v" type="radio" :name="'q' + i" :value="o" /><span>{{ o }}</span></label></template>
          </div>
          <button class="grey next">Next &gt;&gt;</button>
        </form>
        <div class="pfoot"><button class="grey">Close</button></div>
        <footer class="pstatus"><Icon n="zoom" w="13" /><span>100%</span><Icon n="caret" w="8" h="5" /><Icon class="grip" n="grip" w="9" /></footer>
      </div>
    </section>
  </div>
</template>

<style>
body { margin: 0; }
</style>

<style scoped>
* { box-sizing: border-box; }
svg { flex: none; display: block; overflow: visible; }
button { border: 0; background: none; padding: 0; margin: 0; font: inherit; color: inherit; display: flex; align-items: center; justify-content: center; white-space: nowrap; }
input, select { font: inherit; color: inherit; margin: 0; border: 0; background: none; padding: 0; outline: 0; min-width: 0; }
h1, h2, h3, p, ul { margin: 0; padding: 0; }
.desktop { display: grid; grid-template-columns: 1fr 1fr; min-height: 100vh; font: 12px/16px Roboto, "Open Sans", sans-serif; color: #444; background: #fff; overflow: hidden; }
.monitor { display: flex; min-width: 0; position: relative; }
.second { flex-direction: column; }

/* taskbars */
.vbar { width: 62px; flex: none; background: #655525; display: flex; flex-direction: column; color: #fff; }
.sys { height: 40px; }
.vbar .search { height: 42px; }
.app { position: relative; }
.vbar .app { height: 47px; }
.app.open::before, .app.active::before, .app.alert::before { content: ""; position: absolute; background: #fbeaa8; }
.vbar .app::before { left: 0; top: 5px; bottom: 4px; width: 2px; }
.vbar .many::before { width: 4px; border-right: 2px solid #b7a76f; }
.active { background: #9a7b27; }
.vbar .active, .vbar .alert { border-right: 4px solid #84691f; padding-left: 4px; }
.vbar .active::before, .vbar .alert::before { top: 0; bottom: 0; }
.alert { background: #cd7716; }
.vbar .alert { border-right-color: #bd6f16; }
.app.alert::before { background: #ff7300; }
.tray { margin-top: auto; display: flex; flex-direction: column; }
.more { height: 24px; padding-left: 41px; display: flex; align-items: center; }
.trayrow { height: 24px; padding: 0 9px 0 13px; display: flex; align-items: center; justify-content: space-between; }
.clock { display: flex; flex-direction: column; align-items: center; line-height: 17px; }
.vbar .clock { padding-top: 12px; }
.notif { height: 50px; margin-bottom: 5px; display: flex; justify-content: center; padding-top: 18px; border-bottom: 1px solid #958a66; }
.hbar { height: 40px; flex: none; background: #655525; color: #fff; display: flex; }
.hbar .sys { width: 48px; }
.hbar .search { width: 50px; }
.hbar .app { width: 49px; height: 40px; }
.hbar .app::before { left: 5px; right: 4px; bottom: 0; height: 2px; }
.hbar .many::before { border-right: 8px solid #b7a76f; }
.hbar .active, .hbar .alert { border-right: 4px solid #84691f; }
.hbar .alert { border-right-color: #bd6f16; }
.hbar .active::before, .hbar .alert::before { left: 0; right: 0; }
.hbar .clock { margin-left: auto; padding: 2px 6px 0 0; }

/* excel chrome */
.excel { flex: 1; min-width: 0; display: flex; flex-direction: column; background: #e6e6e6; }
.titlebar { height: 35px; background: #217346; color: #a6cdb5; display: grid; grid-template-columns: 1fr auto 1fr; align-items: center; }
.titlebar h1 { font: inherit; }
.qat { display: flex; align-items: center; padding-left: 22px; gap: 14px; color: #fff; }
.qat button { gap: 5px; }
.qat .faded { color: #5f9c7a; }
.winbtns { display: flex; justify-content: flex-end; gap: 36px; padding-right: 18px; color: #79ab8e; }
.tabs { height: 24px; background: #217346; color: #fff; display: flex; padding-right: 16px; }
.tabs button { padding: 0 14px; }
.tabs .file { width: 63px; padding-left: 10px; }
.tabs .home { width: 60px; background: #f1f1f1; color: #217346; }
.tell { display: flex; align-items: center; gap: 5px; padding-left: 34px; flex: 1; color: #d0e3d8; }
.tell input { flex: 1; }
.tell input::placeholder { color: #d0e3d8; opacity: 1; }
.tabs .signin { padding: 0 10px; }
.tabs .share { background: #0f5c30; padding: 0 8px 0 7px; gap: 3px; margin-bottom: 1px; }

.ribbon { height: 93px; background: #f1f1f1; border-bottom: 1px solid #d2d2d2; display: flex; color: #444; }
.group { display: flex; flex-direction: column; position: relative; flex: none; }
.group::after { content: ""; position: absolute; right: 0; top: 4px; bottom: 5px; width: 1px; background: #d4d4d4; }
.g-clip { width: 158px; }
.g-font { width: 207px; }
.g-align { width: 264px; }
.g-num { width: 140px; }
.g-styles { flex: 1 1 0; min-width: 0; }
.g-cells { width: 136px; }
.g-edit { width: 187px; }
.gbody { flex: 1; display: flex; padding: 6px 4px 0; }
.group > footer { height: 16px; text-align: center; color: #666; display: flex; align-items: center; justify-content: center; position: relative; padding-right: 14px; }
.g-styles > footer, .g-cells > footer { padding-right: 0; }
.launch { position: absolute; right: 4px; top: 4px; }
.big { flex-direction: column; justify-content: flex-start; line-height: 16px; padding-top: 2px; }
.big span { display: flex; align-items: center; gap: 3px; }
.big > svg:first-child { margin-bottom: 3px; }
.big > svg:last-child { margin-top: 5px; }
.big svg[width="6"] { color: #777; }
.paste { width: 46px; }
.stack { display: flex; flex-direction: column; }
.stack button { height: 23px; justify-content: flex-start; gap: 4px; padding-bottom: 4px; }
.stack .far { margin-left: 8px; }
.two { display: flex; flex-direction: column; gap: 6px; }
.gbody.two, .gbody > .two { padding-top: 11px; }
.g-align .gbody { padding-top: 0; }
.row { height: 24px; display: flex; align-items: center; }
.t20 { width: 20px; height: 24px; }
.t22 { width: 22px; height: 24px; }
.t24 { width: 24px; height: 24px; }
.on { background: #c5c5c5; }
.car { width: 10px; display: flex; justify-content: center; color: #777; }
.sep { width: 9px; height: 22px; background: linear-gradient(#d4d4d4, #d4d4d4) center / 1px 100% no-repeat; }
.sym { font-size: 16px; }
.combo { height: 24px; border: 1px solid #c6c6c6; background: #fff url("data:image/svg+xml,%3Csvg xmlns='http://www.w3.org/2000/svg' width='6' height='4'%3E%3Cpath d='M0 0h6L3 4z' fill='%23777'/%3E%3C/svg%3E") right 4px center no-repeat; appearance: none; padding-left: 3px; border-radius: 0; }
.fname { width: 111px; }
.fsize { width: 44px; margin-left: -1px; }
.fmt { width: 131px; }
.wrapcol { flex: 1; margin-left: 4px; padding-left: 8px; background: linear-gradient(#d4d4d4, #d4d4d4) 0 11px / 1px 53px no-repeat; }
.wrapcol .row { justify-content: flex-start; gap: 3px; }
.push { margin-left: 8px; }
.cf { width: 70px; }
.ft { width: 60px; }
.gallery { flex: 1; height: 62px; margin-right: 4px; border: 1px solid #ababab; background: #fff; display: flex; }
.cells { flex: 1; display: grid; grid-template-columns: repeat(5, 1fr); grid-auto-rows: 22px; gap: 6px; padding: 5px 4px 5px 3px; }
.cells button { justify-content: flex-start; padding-left: 4px; font-size: 14px; color: #000; min-width: 0; }
.cells .normal { outline: 2px solid #c3c3c3; outline-offset: 1px; }
.cells .bad { background: #ffc7ce; color: #9c0006; }
.cells .good { background: #c6efce; color: #006100; }
.cells .neutral { background: #ffeb9c; color: #9c6500; }
.cells .calc { background: #f2f2f2; color: #fa7d00; font-weight: 700; border: 1px solid #7f7f7f; padding-left: 3px; }
.cells .check { background: #a5a5a5; color: #fff; font-weight: 700; border: 3px double #3f3f3f; padding-left: 1px; }
.cells .expl { color: #7f7f7f; font-style: italic; }
.cells .inp { background: #ffcc99; color: #3f3f76; border: 1px solid #7f7f7f; padding-left: 3px; }
.cells .linked { color: #fa7d00; border-bottom: 3px double #fa7d00; }
.cells .notec { background: #ffffcc; border: 1px solid #b2b2b2; padding-left: 3px; }
.gscroll { width: 15px; display: flex; flex-direction: column; border-left: 1px solid #c6c6c6; color: #666; }
.gscroll button { flex: 1; border-bottom: 1px solid #c6c6c6; }
.gscroll .off { background: #e1e1e1; color: #bbb; }
.g-cells .gbody { padding: 6px 3px 0; }
.g-cells .big { flex: 1; }
.g-edit .gbody { padding-left: 7px; }
.g-edit .stack { width: 88px; }
.g-edit .big { width: 44px; }
.collapse { width: 77px; align-items: flex-end; justify-content: flex-end; padding: 0 10px 5px 0; color: #666; }

.fbar { height: 36px; padding: 10px 5px 0; display: flex; align-items: flex-start; }
.namebox { width: 102px; height: 26px; padding-left: 6px; background-position: right 7px center; }
.vdots { width: 1px; height: 11px; margin: 8px 15px 0 14px; background: repeating-linear-gradient(#999 0 2px, transparent 2px 4px); }
.fx { width: 110px; height: 26px; background: #fff; border: 1px solid #c6c6c6; display: flex; align-items: center; justify-content: space-between; padding: 0 12px 0 11px; }
.fx i { font: italic 700 16px/20px "Liberation Serif", serif; }
.fx small { font-size: 12px; }
.formula { flex: 1; height: 26px; margin-left: 3px; background: #fff; border: 1px solid #c6c6c6; display: flex; align-items: center; padding: 0 4px 0 11px; }
.formula input { flex: 1; }

/* recovery */
.work { flex: 1; display: flex; min-height: 0; }
.recovery { width: 244px; flex: none; padding: 20px 12px 14px 14px; display: flex; flex-direction: column; font-size: 12px; }
.recovery h2 { font-size: 22px; line-height: 32px; font-weight: 300; color: #217346; }
.recovery p { line-height: 13px; margin-top: 6px; color: #555; white-space: nowrap; }
.recovery h3 { font-size: 12px; line-height: 16px; font-weight: 700; margin-top: 15px; border-bottom: 1px solid #c6c6c6; color: #444; }
.files { flex: 1; background: #fff; border: 1px solid #ababab; margin: 4px 0 0 9px; color: #222; padding: 5px 11px; }
.files .file { display: flex; gap: 9px; line-height: 15px; margin-bottom: 25px; white-space: pre; }
.which { margin-top: 56px; display: flex; gap: 6px; color: #4472a0; text-decoration: none; align-items: center; }
.closebtn { align-self: flex-end; width: 46px; height: 23px; margin-top: 7px; border: 1px solid #ababab; background: #fdfdfd; }

/* sheet */
.sheet { flex: 1; min-width: 0; display: flex; flex-direction: column; border-left: 1px solid #ababab; margin-top: 10px; }
.gridwrap { display: flex; height: 832px; overflow: hidden; border-bottom: 1px solid #999; }
.grid { flex: 1; min-width: 0; width: 0; table-layout: fixed; border-spacing: 0; font-size: 12px; line-height: 14px; color: #000; background: #fff; border-right: 1px solid #999; }
.grid th { background: #e6e6e6; font-weight: 400; color: #222; padding: 0; text-align: center; }
.grid thead th { height: 16px; border-right: 1px solid #ababab; border-bottom: 1px solid #999; }
.grid .corner svg { margin: 2px 3px 0 auto; }
.grid tbody th { border-right: 1px solid #999; border-bottom: 1px solid #bbb; }
.grid td { height: 17px; padding: 0 0 0 2px; border-right: 1px solid #d4d4d4; border-bottom: 1px solid #d4d4d4; overflow: hidden; white-space: nowrap; }
.grid .short td { height: 16px; }
.grid .b { font-weight: 500; }
.grid .r { text-align: right; padding-right: 2px; }
.grid .flag { background: linear-gradient(135deg, #107c10 3px, transparent 4px) no-repeat; }
.vscroll { width: 22px; padding: 3px 4px 0 4px; display: flex; flex-direction: column; color: #666; }
.vscroll button { height: 14px; border: 1px solid #c6c6c6; background: #fff; }
.thumb { flex: 1; border: 1px solid #ababab; background: #fff; margin-top: 1px; }
.gap { height: 17px; background: #dadada; }
.sheettabs { flex: 1; min-height: 27px; display: flex; align-items: flex-start; font-size: 12px; padding-right: 22px; }
.arrows { width: 100px; height: 26px; display: flex; align-items: center; gap: 24px; padding-left: 28px; color: #bbb; }
.sheettabs > button { height: 23px; padding-top: 3px; }
.sheettabs > .readme { width: 81px; border-left: 1px solid #ababab; }
.sheettabs > .cur { width: 85px; height: 25px; background: #fff; color: #217346; font-weight: 700; border: 1px solid #ababab; border-top: 0; border-bottom: 2px solid #217346; }
.sheettabs > .last { width: 158px; border-right: 1px solid #ababab; }
.sheettabs > .add { padding: 4px 0 0 32px; }
.sheettabs .vdots { margin: 8px 15px 0 auto; }
.hscroll { flex: 0 1 606px; height: 15px; margin-top: 6px; background: #dadada; display: flex; justify-content: space-between; color: #555; }
.hscroll button { width: 15px; border: 1px solid #ababab; background: #fff; }
.hthumb { width: 161px; border: 1px solid #ababab; background: #fff; margin-right: auto; }
.status { height: 23px; flex: none; background: #f1f1f1; border-top: 1px solid #c6c6c6; border-bottom: 1px solid #888; display: flex; align-items: center; padding-left: 8px; gap: 19px; }
.views { margin-left: auto; display: flex; align-items: center; height: 100%; padding-right: 8px; }
.views span { width: 38px; height: 100%; display: flex; align-items: center; justify-content: center; }
.minus, .plus { width: 8px; height: 8px; background: linear-gradient(#555, #555) center / 100% 2px no-repeat; }
.minus { margin-left: 5px; }
.plus { background: linear-gradient(#555, #555) center / 100% 2px no-repeat, linear-gradient(#555, #555) center / 2px 100% no-repeat; }
.views input { appearance: none; width: 102px; height: 11px; margin: 0 4px; background: linear-gradient(#aaa, #aaa) center / 100% 1px no-repeat; }
.views input::-webkit-slider-thumb { appearance: none; width: 4px; height: 11px; background: #555; }
.views em { font-style: normal; font-size: 11px; margin-left: 14px; }

/* browser */
.iebar { height: 54px; flex: none; display: flex; align-items: flex-start; padding: 19px 8px 0 1px; gap: 3px; color: #777; overflow: hidden; }
.iebar button:nth-child(2) { margin-top: 7px; }
.address { flex: 1279 1 0; height: 23px; margin-top: 9px; border: 1px solid #ababab; display: flex; align-items: center; gap: 6px; padding: 0 5px 0 3px; min-width: 0; margin-left: 1px; }
.address .url ~ svg { margin-left: 3px; }
.find { flex: 478 1 0; margin-left: 3px; gap: 12px; padding: 0 11px 0 7px; }
.find input { flex: 1; }
.find input::placeholder { color: #222; opacity: 1; }
.url { flex: 1; white-space: nowrap; overflow: hidden; }
.url b { font-weight: 400; color: #000; }
.ietools { display: flex; gap: 8px; margin: 12px 0 0 12px; }
.ietabs { height: 23px; flex: none; display: flex; background: linear-gradient(#fff, #ececec); }
.ietab { width: 200px; border: 1px solid #ababab; border-width: 1px 1px 0 0; background: #fff; color: #222; display: flex; align-items: center; padding: 0 5px; gap: 5px; }
.ietab span { flex: 1; white-space: nowrap; overflow: hidden; }
.x { color: #888; }
.newtab { width: 22px; border: 1px solid #ababab; border-left: 0; }
.apphead { height: 51px; flex: none; display: flex; align-items: center; padding: 0 26px 0 16px; color: #58595b; }
.menu { width: 30px; height: 30px; border-radius: 2px; background: #eb8c00; flex-direction: column; gap: 2px; margin-right: 21px; }
.menu i { width: 14px; height: 3px; background: #fff; }
.brand { font: italic 700 25px/30px "Liberation Serif", serif; margin-left: 9px; }
.user { margin-left: auto; font: 12px/16px "Liberation Sans", sans-serif; display: flex; align-items: center; gap: 4px; padding-top: 8px; }
.bell { position: relative; margin-left: 14px; }
.bell span { position: absolute; left: 13px; top: 0; width: 16px; height: 16px; border-radius: 8px; background: #eb8c00; color: #fff; font: 700 10px/16px "Liberation Sans", sans-serif; text-align: center; }

.appbody { flex: 1; display: flex; }
.sidebar { width: 60px; flex: none; background: #58595b; padding-top: 1px; }
.sidebar button { width: 58px; height: 62px; }
.content { flex: 1; min-width: 0; font: 11px/14px "DejaVu Sans", sans-serif; color: #333; box-shadow: inset 4px 0 4px -2px #ddd; }
.pagetabs { height: 40px; background: #f7f7f7; display: flex; padding: 6px 0 0 5px; gap: 5px; font: 12px/16px "Liberation Sans", sans-serif; }
.ptab { width: 185px; background: #fff; border-radius: 4px 4px 0 0; display: flex; align-items: center; padding: 0 5px 0 10px; gap: 6px; color: #58595b; }
.ptab.off { background: #e8e8e8; color: #999; }
.pin { margin-left: auto; }
.px { margin: 0 0 12px; color: #888; }
.sec { margin: 16px 10px 0 10px; padding: 0 0 7px; border-bottom: 1px solid #888; font: 700 13px/18px "DejaVu Sans", sans-serif; color: #404040; }
.links { list-style: none; padding: 0 0 0 29px; }
.links li { height: 21px; line-height: 18px; position: relative; }
.links li::before { content: ""; position: absolute; left: -16px; top: 5px; width: 9px; height: 9px; border-radius: 50%; background: radial-gradient(circle at 35% 35%, #e58a8a, #a51c1c 60%, #7a1010); }
.links a { color: #000; }
.links .dim { color: #777; }
.bills { margin: 101px 23px 0 5px; }
.billbar { height: 25px; background: #612220; color: #fff; display: flex; align-items: center; justify-content: space-between; padding: 0 12px 0 5px; }
.billbar button { margin-bottom: 4px; }
.billwrap { display: flex; background: #f0f0f0; }
.bills table { flex: 1; table-layout: fixed; width: 0; border-spacing: 0; }
.c1 { width: 227px; }
.c3 { width: 228px; }
.bills th { height: 25px; font-weight: 400; text-align: left; background: #e8e6d6; border: 2px solid #bfbba5; border-top-color: #d9d5c3; border-left: 0; padding: 0 5px; }
.bills th:last-child { text-align: right; padding-right: 22px; border-right-width: 1px; }
.bills td { height: 25px; background: #fcfcfc; border-bottom: 1px solid #ddd5c3; padding: 2px 5px 0; white-space: nowrap; }
.bills td:last-child { text-align: right; }
.bscroll { width: 17px; display: flex; flex-direction: column; align-items: center; padding: 42px 0 18px; color: #606060; background: linear-gradient(#e8e6d6 25px, #f0f0f0 25px); }
.bthumb { width: 15px; height: 24px; background: #cdcdcd; margin: 9px 0 auto; }
.help { margin-top: 28px; padding-bottom: 1px; display: flex; align-items: center; gap: 4px; }

/* popup window */
.popup { position: absolute; left: 304px; right: 390px; top: 54px; height: 825px; border: 1px solid #f9c222; background: #fff; box-shadow: 0 4px 18px rgba(0, 0, 0, .45); display: flex; flex-direction: column; color: #000; font: 11px/14px "DejaVu Sans", sans-serif; }
.ptitle { height: 30px; background: #f9c222; display: flex; align-items: center; padding: 0 18px 0 8px; font: 12px/16px Roboto, "Open Sans", sans-serif; }
.ptitle span { margin: 0 auto 0 4px; }
.ptitle button + button { margin-left: 35px; }
.banner { height: 59px; background: #612220; color: #fff; padding: 5px; }
.banner h2 { font-size: 11px; line-height: 16px; }
.banner p { margin-top: 5px; line-height: 16px; }
.opttab { width: 250px; height: 18px; margin-top: 7px; background: #612220; color: #fff; display: flex; align-items: center; justify-content: space-between; padding: 0 5px 0 15px; }
.wizard { border: 1px solid #4682b4; height: 225px; position: relative; }
.q { display: flex; height: 24px; align-items: center; padding-left: 13px; }
.qt { flex: 1; }
.dim .qt { color: #444; }
.opt { width: 195px; display: flex; align-items: center; gap: 4px; color: #333; }
.opt + .opt { width: 147px; }
.opt span { padding-top: 3px; }
.opt input { appearance: none; width: 13px; height: 13px; border: 1px solid #666; border-radius: 50%; background: #fff; margin-bottom: 3px; }
.opt input:checked { background: radial-gradient(circle, #222 3px, #fff 4px); }
.sel { height: 48px; align-items: flex-start; padding-top: 16px; padding-right: 12px; }
.sel select { width: 330px; height: 23px; margin-top: 4px; border: 1px solid #aaa; border-radius: 0; color: #777; opacity: 1; padding-left: 7px; appearance: none; background: #ededed url("data:image/svg+xml,%3Csvg xmlns='http://www.w3.org/2000/svg' width='10' height='7'%3E%3Cpath d='m1 1 4 4 4-4' fill='none' stroke='%23666' stroke-width='2'/%3E%3C/svg%3E") right 9px center no-repeat; }
.grey { background: #dddddd; border: 1px solid #999; height: 24px; color: #222; }
.next { position: absolute; right: 0; bottom: 1px; width: 61px; }
.pfoot { margin-top: auto; display: flex; justify-content: flex-end; }
.pfoot button { width: 100px; }
.pstatus { height: 23px; background: #f0f0f0; border-top: 1px solid #d7d7d7; display: flex; align-items: center; justify-content: flex-end; padding-right: 2px; gap: 3px; font: 12px/16px Roboto, "Open Sans", sans-serif; }
.pstatus span { margin-right: 11px; }
.grip { margin: 8px 0 0 11px; }
</style>
